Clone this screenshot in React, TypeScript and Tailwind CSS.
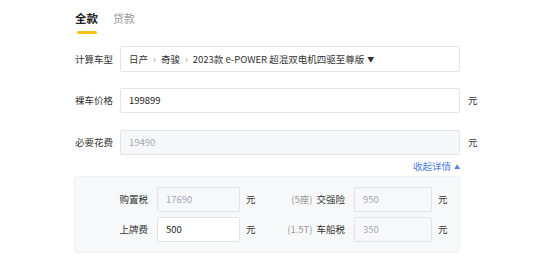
import { useState } from "react";

// one labelled field of the detail panel
function DetailField({
  label,
  note,
  value,
  editable,
  labelWidth,
  inputWidth,
}: {
  label: string;
  note?: string;
  value: string;
  editable?: boolean;
  labelWidth: string;
  inputWidth: string;
}) {
  return (
    <div className="flex items-center">
      <div className={`${labelWidth} text-right text-[#333] shrink-0`}>
        {note && <span className="text-[#999] mr-[4px]">{note}</span>}
        {label}
      </div>
      <div
        className={`${inputWidth} ml-[9px] h-[25px] flex items-center px-[8px] rounded-[2px] border border-[#e3e4e8] ${
          editable ? "bg-white text-[#222]" : "bg-[#f7f8fa] text-[#a3a7b0]"
        }`}
      >
        {value}
      </div>
      <span className="ml-[6px] w-[20px] text-[#333]">元</span>
    </div>
  );
}

export default function App() {
  const [tab, setTab] = useState("full");

  return (
    <div
      className="w-[553px] h-[258px] bg-white overflow-hidden text-[9.5px] text-[#333]"
      style={{ fontFamily: '"Noto Sans CJK SC", "Noto Sans", sans-serif' }}
    >
      <div className="pl-[75px] w-[460px] box-content">
        {/* tabs */}
        <div className="flex items-end gap-[15px] h-[34px] pt-[10px]">
          <button
            onClick={() => setTab("full")}
            className="relative h-full flex flex-col items-center"
          >
            <span className={`text-[11.5px] leading-[16px] ${tab === "full" ? "font-bold text-[#222]" : "text-[#999]"}`}>
              全款
            </span>
            {tab === "full" && <span className="mt-[5px] w-[20px] h-[3px] rounded-full bg-[#f6c21c]" />}
          </button>
          <button onClick={() => setTab("loan")} className="h-full flex flex-col items-center">
            <span className={`text-[11px] leading-[16px] ${tab === "loan" ? "font-bold text-[#222]" : "text-[#999]"}`}>
              贷款
            </span>
            {tab === "loan" && <span className="mt-[5px] w-[20px] h-[3px] rounded-full bg-[#f6c21c]" />}
          </button>
        </div>

        {/* 计算车型 */}
        <div className="flex items-center mt-[12px]">
          <span className="w-[45px] shrink-0">计算车型</span>
          <div className="w-[340px] h-[26px] flex items-center px-[8px] border border-[#e3e4e8] rounded-[2px] text-[#333]">
            <span>日产</span>
            <span className="mx-[5px] text-[#888]">›</span>
            <span>奇骏</span>
            <span className="mx-[5px] text-[#888]">›</span>
            <span>2023款 e-POWER 超混双电机四驱至尊版</span>
            <span className="ml-[3px] text-[7px]">▼</span>
          </div>
        </div>

        {/* 裸车价格 */}
        <div className="flex items-center mt-[16px]">
          <span className="w-[45px] shrink-0">裸车价格</span>
          <div className="w-[340px] h-[25px] flex items-center px-[8px] border border-[#e3e4e8] rounded-[2px] text-[#222]">
            199899
          </div>
          <span className="ml-[8px]">元</span>
        </div>

        {/* 必要花费 */}
        <div className="flex items-center mt-[17px]">
          <span className="w-[45px] shrink-0">必要花费</span>
          <div className="w-[340px] h-[25px] flex items-center px-[8px] border border-[#e3e4e8] rounded-[2px] bg-[#f6f7fa] text-[#a3a7b0]">
            19490
          </div>
          <span className="ml-[8px]">元</span>
        </div>

        <div className="w-[385px] flex justify-end items-center mt-[4px] h-[14px] text-[#4b80e6]">
          <span>收起详情</span>
          <span className="ml-[3px] text-[6px]">▲</span>
        </div>

        {/* detail panel */}
        <div className="w-[386px] -ml-[1px] mt-[3px] bg-[#f7f8fa] border border-[#eef0f3] rounded-[3px] py-[10px] flex flex-col gap-[5px]">
          <div className="flex items-center">
            <DetailField label="购置税" value="17690" labelWidth="w-[73px]" inputWidth="w-[83px]" />
            <DetailField label="交强险" note="(5座)" value="950" labelWidth="w-[79px]" inputWidth="w-[78px]" />
          </div>
          <div className="flex items-center">
            <DetailField label="上牌费" value="500" editable labelWidth="w-[73px]" inputWidth="w-[83px]" />
            <DetailField label="车船税" note="(1.5T)" value="350" labelWidth="w-[79px]" inputWidth="w-[78px]" />
          </div>
        </div>
      </div>
    </div>
  );
}
